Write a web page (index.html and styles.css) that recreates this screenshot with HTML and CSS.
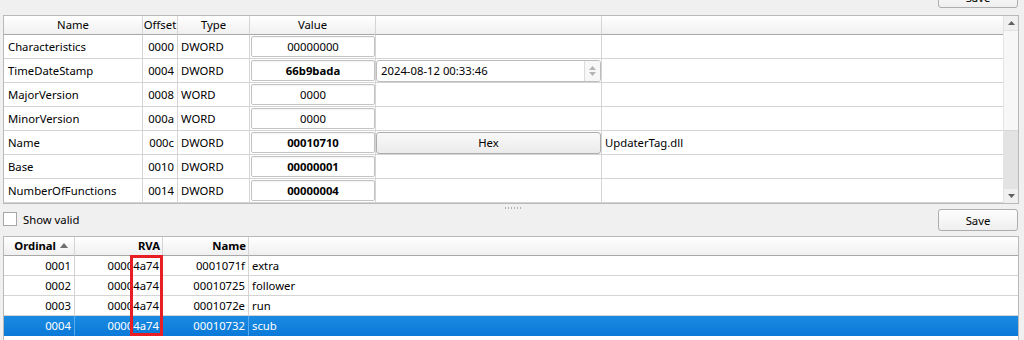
FILE: index.html
```html
<!DOCTYPE html>
<html>
<head>
<meta charset="utf-8">
<link rel="stylesheet" href="styles.css">
</head>
<body>
<div class="topbar"><button class="btn save-top">Save</button></div>

<div class="frame t1">
  <div class="view">
    <div class="grid1 hdr">
      <div class="h">Name</div><div class="h">Offset</div><div class="h">Type</div><div class="h">Value</div><div class="h"></div><div class="h last"></div>
    </div>
    <div class="grid1 row">
      <div class="c name">Characteristics</div><div class="c off">0000</div><div class="c">DWORD</div>
      <div class="c val"><span class="edit">00000000</span></div><div class="c"></div><div class="c last"></div>
    </div>
    <div class="grid1 row">
      <div class="c name">TimeDateStamp</div><div class="c off">0004</div><div class="c">DWORD</div>
      <div class="c val"><span class="edit b">66b9bada</span></div>
      <div class="c wid"><span class="spin"><span class="spin-text">2024-08-12 00:33:46</span><span class="spin-btns"><svg width="9" height="14" viewBox="0 0 9 14"><path d="M1 6 L4.5 2 L8 6 Z" fill="#b4b4b4"/><path d="M1 8 L4.5 12 L8 8 Z" fill="#b4b4b4"/></svg></span></span></div>
      <div class="c last"></div>
    </div>
    <div class="grid1 row">
      <div class="c name">MajorVersion</div><div class="c off">0008</div><div class="c">WORD</div>
      <div class="c val"><span class="edit">0000</span></div><div class="c"></div><div class="c last"></div>
    </div>
    <div class="grid1 row">
      <div class="c name">MinorVersion</div><div class="c off">000a</div><div class="c">WORD</div>
      <div class="c val"><span class="edit">0000</span></div><div class="c"></div><div class="c last"></div>
    </div>
    <div class="grid1 row">
      <div class="c name">Name</div><div class="c off">000c</div><div class="c">DWORD</div>
      <div class="c val"><span class="edit b">00010710</span></div>
      <div class="c wid"><span class="hexbtn">Hex</span></div>
      <div class="c last txt">UpdaterTag.dll</div>
    </div>
    <div class="grid1 row">
      <div class="c name">Base</div><div class="c off">0010</div><div class="c">DWORD</div>
      <div class="c val"><span class="edit b">00000001</span></div><div class="c"></div><div class="c last"></div>
    </div>
    <div class="grid1 row">
      <div class="c name">NumberOfFunctions</div><div class="c off">0014</div><div class="c">DWORD</div>
      <div class="c val"><span class="edit b">00000004</span></div><div class="c"></div><div class="c last"></div>
    </div>
  </div>
  <div class="vscroll">
    <div class="arrow"><svg width="7" height="4" viewBox="0 0 7 4"><path d="M0 4 L3.5 0 L7 4 Z" fill="#606060"/></svg></div>
    <div class="handle"></div>
    <div class="groove"></div>
    <div class="arrow"><svg width="7" height="4" viewBox="0 0 7 4"><path d="M0 0 L3.5 4 L7 0 Z" fill="#606060"/></svg></div>
  </div>
</div>

<div class="splitter"><span class="dots"></span></div>

<div class="midbar">
  <label class="chk"><span class="box"></span><span>Show valid</span></label>
  <button class="btn save">Save</button>
</div>

<div class="frame t2">
  <div class="view2">
    <div class="grid2 hdr">
      <div class="h r b">Ordinal<svg class="sort" width="8" height="5" viewBox="0 0 8 5"><path d="M0 5 L4 0 L8 5 Z" fill="#6e6e6e"/></svg></div>
      <div class="h r b">RVA</div><div class="h r b">Name</div><div class="h last"></div>
    </div>
    <div class="grid2 row2">
      <div class="c r">0001</div><div class="c r">00004a74</div><div class="c r">0001071f</div><div class="c last">extra</div>
    </div>
    <div class="grid2 row2">
      <div class="c r">0002</div><div class="c r">00004a74</div><div class="c r">00010725</div><div class="c last">follower</div>
    </div>
    <div class="grid2 row2">
      <div class="c r">0003</div><div class="c r">00004a74</div><div class="c r">0001072e</div><div class="c last">run</div>
    </div>
    <div class="grid2 row2 sel">
      <div class="c r">0004</div><div class="c r">00004a74</div><div class="c r">00010732</div><div class="c last">scub</div>
    </div>
    <div class="mark"></div>
  </div>
</div>
</body>
</html>
```

FILE: styles.css
```css
* { box-sizing: border-box; }
html, body { margin: 0; padding: 0; }
body {
  width: 1024px;
  height: 340px;
  overflow: hidden;
  background: #f0f0f0;
  font-family: "Noto Sans", "Open Sans", sans-serif;
  font-size: 11.3px;
  color: #000;
  padding: 0 5px 0 3px;
}
.topbar {
  display: flex;
  justify-content: flex-end;
  height: 15px;
  padding-right: 1px;
}
.btn {
  font: inherit;
  color: #000;
  background: linear-gradient(#fdfdfd, #efefef);
  border: 1px solid #adadad;
  border-radius: 3px;
  width: 80px;
  height: 22px;
  padding: 0;
}
.save-top { margin-top: -14px; }

.frame {
  border: 1px solid #b9b9b9;
  background: #fff;
  display: flex;
}
.t1 { height: 189px; }
.view { flex: 1; overflow: hidden; }
.grid1 {
  display: grid;
  grid-template-columns: 139px 35px 72px 126px 226px 1fr;
}
.hdr { height: 19px; }
.h {
  background: linear-gradient(#ffffff, #f0f0f0);
  border-right: 1px solid #d5d5d5;
  border-bottom: 1px solid #a8a8a8;
  text-align: center;
  line-height: 18px;
  white-space: nowrap;
}
.h.last { border-right: none; }
.row { height: 24px; }
.c {
  border-right: 1px solid #d4d4d4;
  border-bottom: 1px solid #d4d4d4;
  line-height: 23px;
  white-space: nowrap;
  overflow: hidden;
}
.c.last { border-right: none; }
.name { padding-left: 4px; }
.off { text-align: right; padding-right: 3px; }
.grid1 .c:nth-child(3) { padding-left: 3px; }
.txt { padding-left: 3px; }
.val { padding: 1px 0 1px 1px; }
.edit {
  display: block;
  height: 21px;
  line-height: 19px;
  border: 1px solid #c3c3c3;
  border-radius: 2px;
  background: #fff;
  text-align: center;
  box-shadow: inset 0 1px 0 #f4f4f4;
}
.b { font-weight: bold; }
.wid { padding: 1px 0; }
.spin {
  display: flex;
  height: 22px;
  border: 1px solid #bcbcbc;
  border-radius: 3px;
  background: #fff;
}
.spin-text { flex: 1; padding-left: 4px; line-height: 20px; }
.spin-btns {
  width: 16px;
  display: flex;
  align-items: center;
  justify-content: center;
  border-left: 1px solid #dcdcdc;
  background: #f7f7f7;
  border-radius: 0 2px 2px 0;
}
.hexbtn {
  display: block;
  height: 22px;
  line-height: 20px;
  border: 1px solid #adadad;
  border-radius: 3px;
  background: linear-gradient(#f9f9f9, #ebebeb);
  text-align: center;
}
.vscroll {
  width: 15px;
  display: flex;
  flex-direction: column;
  border-left: 1px solid #e4e4e4;
  background: #f0f0f0;
}
.arrow {
  height: 14px;
  display: flex;
  align-items: center;
  justify-content: center;
}
.handle {
  height: 101px;
  background: #f7f7f7;
  border-top: 1px solid #e2e2e2;
  border-bottom: 1px solid #d8d8d8;
}
.groove { flex: 1; background: #e3e3e3; }

.splitter {
  height: 5px;
  display: flex;
  justify-content: center;
  align-items: flex-end;
}
.dots {
  width: 16px;
  height: 2px;
  margin-left: 4px;
  background: repeating-linear-gradient(90deg, #b0b0b0 0 1px, transparent 1px 3px);
}
.midbar {
  height: 27px;
  display: flex;
  justify-content: space-between;
  align-items: flex-start;
  padding-right: 1px;
}
.chk {
  display: flex;
  align-items: center;
  gap: 6px;
  height: 18px;
  margin-top: 1px;
}
.box {
  width: 14px;
  height: 14px;
  border: 1px solid #a6a6a6;
  background: #fff;
}
.t2 { height: 105px; border-bottom: none; }
.view2 { flex: 1; position: relative; overflow: hidden; }
.grid2 {
  display: grid;
  grid-template-columns: 71px 88px 86px 1fr;
}
.r { text-align: right; padding-right: 3px; }
.h.r { padding-right: 2px; }
.sort { margin: 0 4px 2px 4px; vertical-align: middle; }
.row2 { height: 20px; }
.row2 .c { line-height: 19px; }
.row2 .c.last { padding-left: 3px; }
.sel {
  background: linear-gradient(#1a8be2, #0a79d8);
  color: #fff;
}
.sel .c { border-right-color: #5aa9ea; border-bottom-color: #0a79d8; }
.mark {
  position: absolute;
  left: 126px;
  top: 18px;
  width: 33px;
  height: 81px;
  border: 3px solid #e81e25;
}
```
